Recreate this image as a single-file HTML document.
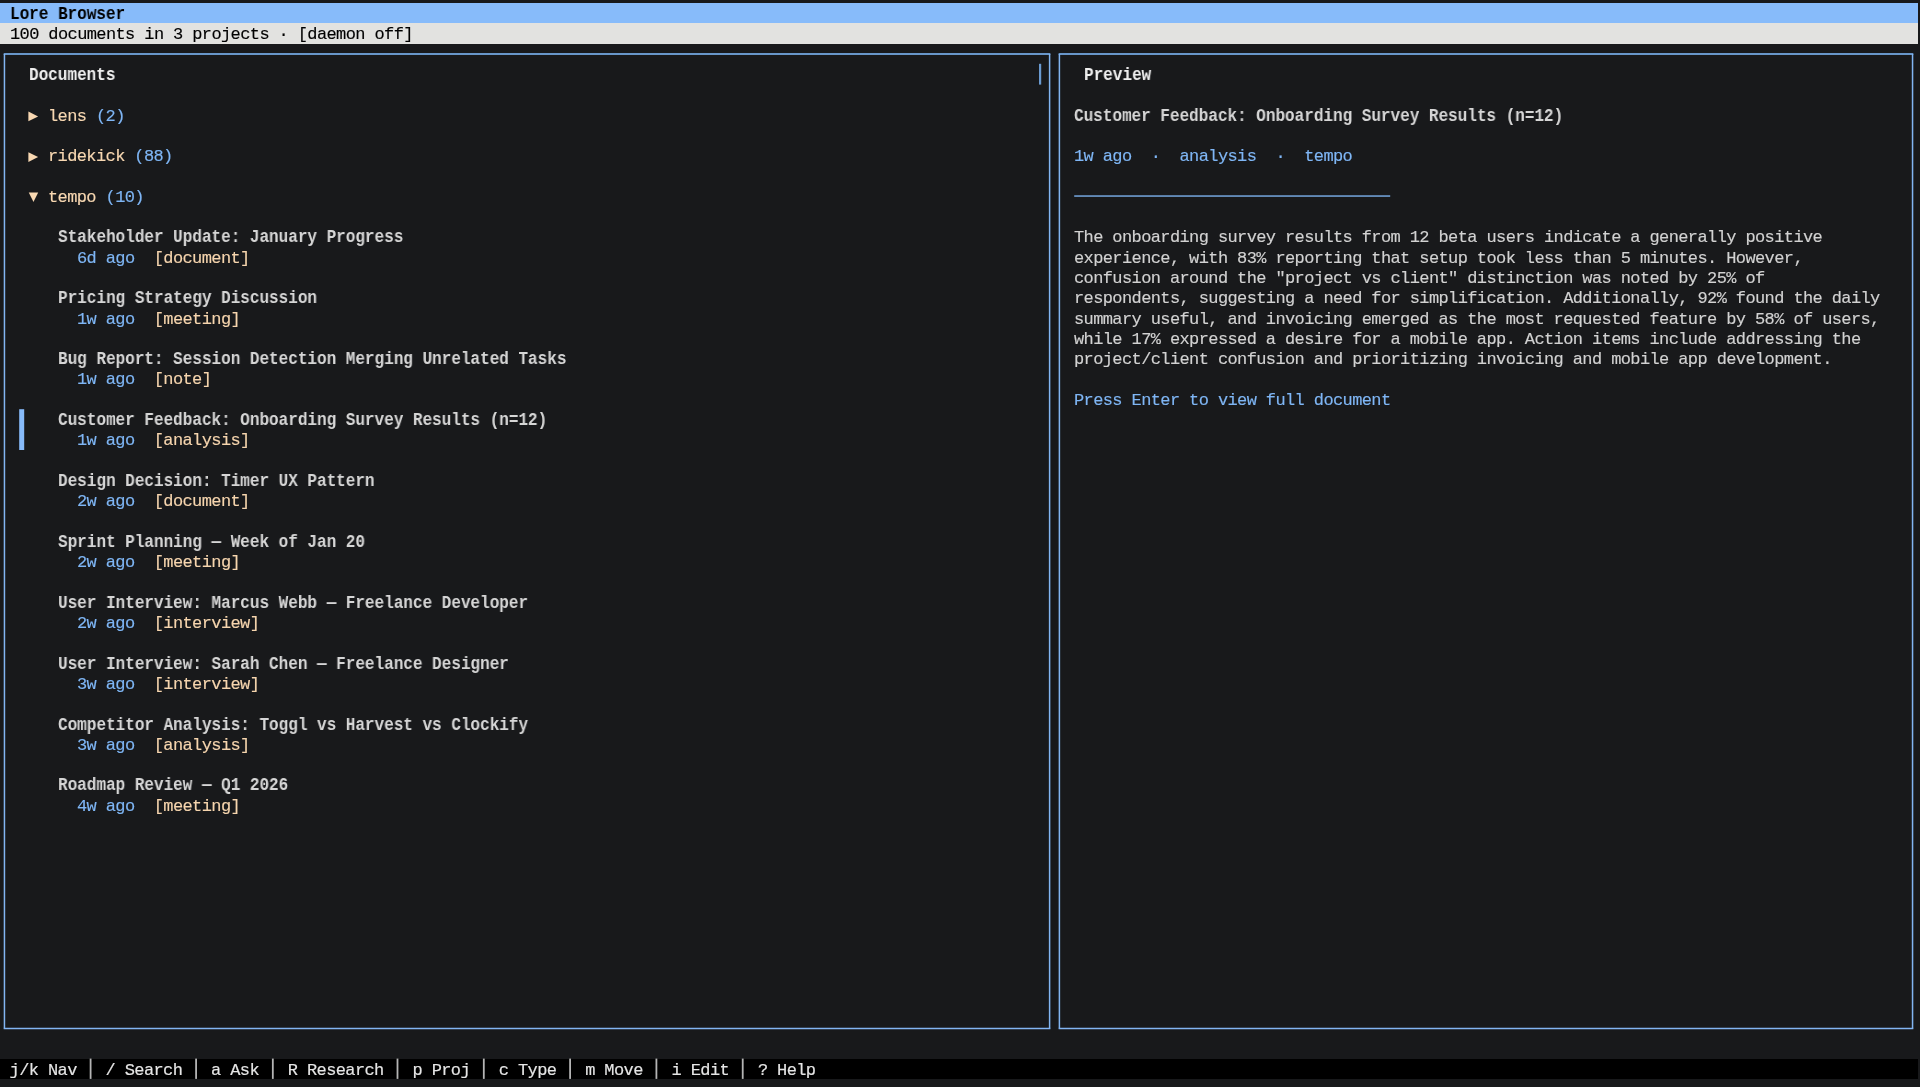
<!DOCTYPE html>
<html><head><meta charset="utf-8"><style>
html,body{margin:0;padding:0;}
body{width:1920px;height:1087px;background:#18191b;position:relative;overflow:hidden;font-family:"Liberation Mono",monospace;font-size:17px;-webkit-font-smoothing:antialiased;}
.r{position:absolute;white-space:pre;line-height:20.3px;height:20.3px;letter-spacing:-0.610px;will-change:transform;-webkit-text-stroke:0.15px currentColor;}
.r .b, .r.b{-webkit-text-stroke:0;}
.rb{font-weight:bold;font-size:17.5px;letter-spacing:-0.076px;transform:scaleX(0.92);transform-origin:0 0;-webkit-text-stroke:0;}
.b{font-weight:bold;font-size:17.5px;letter-spacing:-0.91px;position:relative;top:-1px;}
.hdr{color:#000;}
.subt{color:#000;}
.ptitle{color:#f0f0f0;}
.peach{color:#f8d8b2;}
.blue{color:#7fb6f5;}
.title{color:#d6d6d6;}
.tag{color:#f6d5ae;}
.para{color:#d2d2d2;}
.bartxt{color:#e6e6e6;}
.sep{color:#b4b4b4;}
.box{position:absolute;}
</style></head><body>

<div class="box" style="left:0;top:3.0px;width:1918px;height:20.3px;background:#87bbfa"></div>
<div class="box" style="left:0;top:23.30px;width:1918px;height:20.3px;background:#e2e2e0"></div>
<div class="box" style="left:0;top:1058.60px;width:1918px;height:20.3px;background:#000000"></div>
<svg width="1920" height="1087" viewBox="0 0 1920 1087" style="position:absolute;left:0;top:0" shape-rendering="geometricPrecision"><rect x="3.70" y="53.00" width="1046.65" height="2" fill="#6896c9"/><rect x="3.70" y="1027.75" width="1046.65" height="1.5" fill="#82b5f2"/><rect x="3.70" y="54.00" width="1.5" height="974.50" fill="#82b5f2"/><rect x="1048.85" y="54.00" width="1.5" height="974.50" fill="#82b5f2"/><rect x="1058.65" y="53.00" width="854.65" height="2" fill="#6896c9"/><rect x="1058.65" y="1027.75" width="854.65" height="1.5" fill="#82b5f2"/><rect x="1058.65" y="54.00" width="1.5" height="974.50" fill="#82b5f2"/><rect x="1911.80" y="54.00" width="1.5" height="974.50" fill="#82b5f2"/><rect x="1039.0" y="63.8" width="2.2" height="20.8" fill="#6a9ad0"/><rect x="19.2" y="409.2" width="5.0" height="40.8" fill="#87bbfa"/><rect x="89.70" y="1058.60" width="1.8" height="20.30" fill="#b4b4b4"/><rect x="195.19" y="1058.60" width="1.8" height="20.30" fill="#b4b4b4"/><rect x="271.92" y="1058.60" width="1.8" height="20.30" fill="#b4b4b4"/><rect x="396.59" y="1058.60" width="1.8" height="20.30" fill="#b4b4b4"/><rect x="482.90" y="1058.60" width="1.8" height="20.30" fill="#b4b4b4"/><rect x="569.20" y="1058.60" width="1.8" height="20.30" fill="#b4b4b4"/><rect x="655.51" y="1058.60" width="1.8" height="20.30" fill="#b4b4b4"/><rect x="741.82" y="1058.60" width="1.8" height="20.30" fill="#b4b4b4"/><polygon points="28.4,111.6 38.1,116.45 28.4,121.3" fill="#f8d8b2"/><polygon points="28.4,152.2 38.1,157.05 28.4,161.9" fill="#f8d8b2"/><polygon points="28.75,192.4 38.2,192.4 33.47,201.9" fill="#f8d8b2"/><rect x="1074.2" y="195.2" width="316.0" height="1.7" fill="#6a96c8"/></svg>
<div class="r rb hdr" style="left:9.59px;top:4.00px">Lore Browser</div>
<div class="r" style="left:9.59px;top:25.30px"><span class="subt">100 documents in 3 projects · [daemon off]</span></div>
<div class="r rb ptitle" style="left:28.77px;top:64.90px">Documents</div>
<div class="r rb ptitle" style="left:1083.67px;top:64.90px">Preview</div>
<div class="r" style="left:47.95px;top:106.50px"><span class="peach">lens </span><span class="blue">(2)</span></div>
<div class="r" style="left:47.95px;top:147.10px"><span class="peach">ridekick </span><span class="blue">(88)</span></div>
<div class="r" style="left:47.95px;top:187.70px"><span class="peach">tempo </span><span class="blue">(10)</span></div>
<div class="r rb title" style="left:57.54px;top:227.30px">Stakeholder Update: January Progress</div>
<div class="r" style="left:76.72px;top:248.60px"><span class="blue">6d ago</span>  <span class="tag">[document]</span></div>
<div class="r rb title" style="left:57.54px;top:288.20px">Pricing Strategy Discussion</div>
<div class="r" style="left:76.72px;top:309.50px"><span class="blue">1w ago</span>  <span class="tag">[meeting]</span></div>
<div class="r rb title" style="left:57.54px;top:349.10px">Bug Report: Session Detection Merging Unrelated Tasks</div>
<div class="r" style="left:76.72px;top:370.40px"><span class="blue">1w ago</span>  <span class="tag">[note]</span></div>
<div class="r rb title" style="left:57.54px;top:410.00px">Customer Feedback: Onboarding Survey Results (n=12)</div>
<div class="r" style="left:76.72px;top:431.30px"><span class="blue">1w ago</span>  <span class="tag">[analysis]</span></div>
<div class="r rb title" style="left:57.54px;top:470.90px">Design Decision: Timer UX Pattern</div>
<div class="r" style="left:76.72px;top:492.20px"><span class="blue">2w ago</span>  <span class="tag">[document]</span></div>
<div class="r rb title" style="left:57.54px;top:531.80px">Sprint Planning — Week of Jan 20</div>
<div class="r" style="left:76.72px;top:553.10px"><span class="blue">2w ago</span>  <span class="tag">[meeting]</span></div>
<div class="r rb title" style="left:57.54px;top:592.70px">User Interview: Marcus Webb — Freelance Developer</div>
<div class="r" style="left:76.72px;top:614.00px"><span class="blue">2w ago</span>  <span class="tag">[interview]</span></div>
<div class="r rb title" style="left:57.54px;top:653.60px">User Interview: Sarah Chen — Freelance Designer</div>
<div class="r" style="left:76.72px;top:674.90px"><span class="blue">3w ago</span>  <span class="tag">[interview]</span></div>
<div class="r rb title" style="left:57.54px;top:714.50px">Competitor Analysis: Toggl vs Harvest vs Clockify</div>
<div class="r" style="left:76.72px;top:735.80px"><span class="blue">3w ago</span>  <span class="tag">[analysis]</span></div>
<div class="r rb title" style="left:57.54px;top:775.40px">Roadmap Review — Q1 2026</div>
<div class="r" style="left:76.72px;top:796.70px"><span class="blue">4w ago</span>  <span class="tag">[meeting]</span></div>
<div class="r rb title" style="left:1074.08px;top:105.50px">Customer Feedback: Onboarding Survey Results (n=12)</div>
<div class="r" style="left:1074.08px;top:147.10px"><span class="blue">1w ago  ·  analysis  ·  tempo</span></div>
<div class="r" style="left:1074.08px;top:228.30px"><span class="para">The onboarding survey results from 12 beta users indicate a generally positive</span></div>
<div class="r" style="left:1074.08px;top:248.60px"><span class="para">experience, with 83% reporting that setup took less than 5 minutes. However,</span></div>
<div class="r" style="left:1074.08px;top:268.90px"><span class="para">confusion around the "project vs client" distinction was noted by 25% of</span></div>
<div class="r" style="left:1074.08px;top:289.20px"><span class="para">respondents, suggesting a need for simplification. Additionally, 92% found the daily</span></div>
<div class="r" style="left:1074.08px;top:309.50px"><span class="para">summary useful, and invoicing emerged as the most requested feature by 58% of users,</span></div>
<div class="r" style="left:1074.08px;top:329.80px"><span class="para">while 17% expressed a desire for a mobile app. Action items include addressing the</span></div>
<div class="r" style="left:1074.08px;top:350.10px"><span class="para">project/client confusion and prioritizing invoicing and mobile app development.</span></div>
<div class="r" style="left:1074.08px;top:390.70px"><span class="blue">Press Enter to view full document</span></div>
<div class="r" style="left:0.00px;top:1060.60px"> <span class="bartxt">j/k Nav</span>   <span class="bartxt">/ Search</span>   <span class="bartxt">a Ask</span>   <span class="bartxt">R Research</span>   <span class="bartxt">p Proj</span>   <span class="bartxt">c Type</span>   <span class="bartxt">m Move</span>   <span class="bartxt">i Edit</span>   <span class="bartxt">? Help</span></div>
</body></html>
